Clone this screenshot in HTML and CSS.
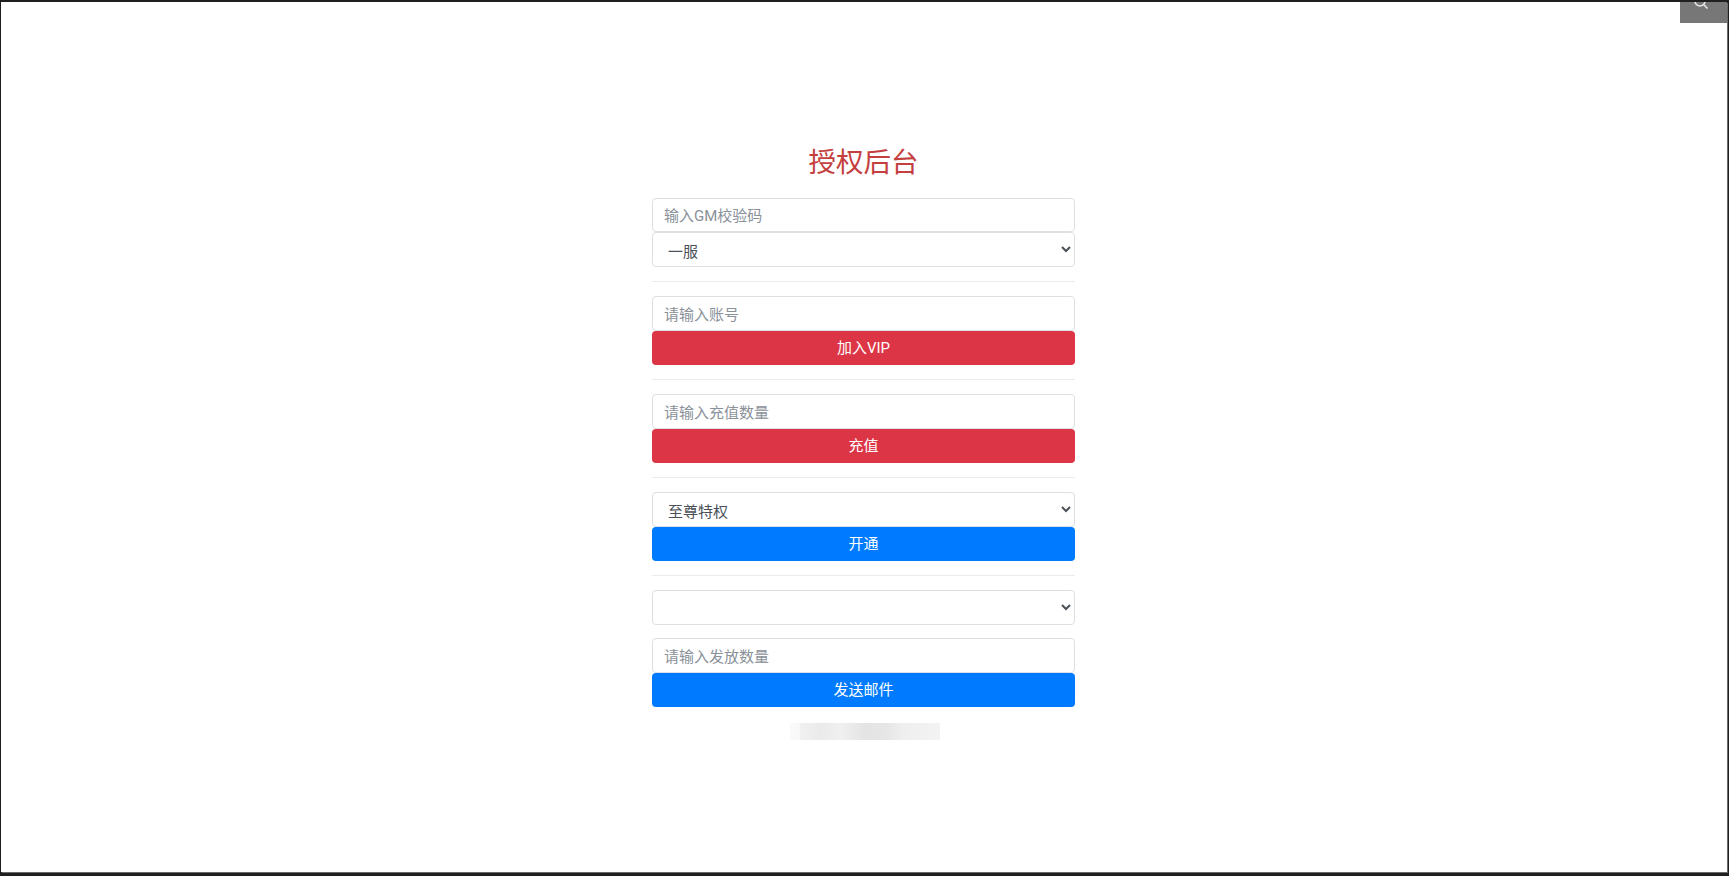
FILE: index.html
```html
<!DOCTYPE html>
<html lang="zh-CN">
<head>
    <meta charset="UTF-8">
    <meta name="viewport" content="width=device-width, initial-scale=1.0">
    <title>授权后台</title>
    <link rel="stylesheet" href="styles.css">
</head>
<body>
    <div class="frame">
        <!-- Search toggle, cut off by the top edge -->
        <div class="search-toggle">
            <svg class="search-icon" viewBox="0 0 16 16" width="16" height="16">
                <circle cx="7" cy="7" r="5"></circle>
                <path d="M10.8 10.8 L14.5 14.5"></path>
            </svg>
        </div>

        <div class="container">
            <h1 class="title">授权后台</h1>

            <input class="field field-code" type="text" placeholder="输入GM校验码">
            <select class="field">
                <option>一服</option>
            </select>
            <hr>

            <input class="field" type="text" placeholder="请输入账号">
            <button class="btn btn-danger">加入VIP</button>
            <hr>

            <input class="field" type="text" placeholder="请输入充值数量">
            <button class="btn btn-danger">充值</button>
            <hr>

            <select class="field">
                <option>至尊特权</option>
            </select>
            <button class="btn btn-primary">开通</button>
            <hr>

            <select class="field field-spaced">
                <option></option>
            </select>
            <input class="field" type="text" placeholder="请输入发放数量">
            <button class="btn btn-primary">发送邮件</button>

            <div class="copyright"></div>
        </div>
    </div>
</body>
</html>
```

FILE: styles.css
```css
* {
    margin: 0;
    padding: 0;
    box-sizing: border-box;
}

html, body {
    height: 100%;
    background: #1f1f1f;
}

body {
    font-family: Roboto, "Noto Sans CJK SC", sans-serif;
    overflow: hidden;
}

.frame {
    position: relative;
    height: 870px;
    margin: 2px 2px 0 1px;
    padding-right: 1px;
    background: #fff;
    overflow: hidden;
    box-shadow: 1px 1px 0 #6a6a6a;
}

.search-toggle {
    position: absolute;
    top: 0;
    right: 0;
    width: 47px;
    height: 21px;
    background: #777;
    overflow: hidden;
}

.search-icon {
    position: absolute;
    top: -8px;
    left: 13px;
    fill: none;
    stroke: #e8e8e8;
    stroke-width: 1.6;
}

.container {
    width: 423px;
    margin: 0 auto;
    padding-top: 139px;
    display: flex;
    flex-direction: column;
}

.title {
    color: #c4403f;
    font-size: 27.5px;
    font-weight: 400;
    line-height: 44px;
    height: 57px;
    text-align: center;
}

.field {
    display: block;
    width: 100%;
    height: 35px;
    padding: 2px 11px 0;
    font-family: inherit;
    font-size: 15px;
    color: #495057;
    background-color: #fff;
    border: 1px solid #dcdfe3;
    border-radius: 4px;
}

select.field {
    padding-top: 5px;
}

.field::placeholder {
    color: #8a9199;
}

.field-code {
    height: 34px;
    padding-top: 1px;
}

.field-spaced {
    margin-bottom: 13px;
}

.btn {
    display: block;
    width: 100%;
    height: 34px;
    padding-bottom: 4px;
    font-family: inherit;
    font-size: 15px;
    color: #fff;
    border: 0;
    border-radius: 4px;
}

.btn-danger {
    background: #dc3545;
}

.btn-primary {
    background: #007bff;
}

hr {
    height: 1px;
    margin: 14px 0;
    border: 0;
    background: rgba(0, 0, 0, 0.08);
}

/* Blurred out line under the form */
.copyright {
    width: 150px;
    height: 17px;
    margin: 16px 135px 0 138px;
    background: linear-gradient(90deg, #fafafa 0, #f8f8f8 10px, #f1f1f1 10px, #eaeaea 30px, #f0f0f0 50px, #e4e4e4 75px, #e6e6e6 95px, #efefef 115px, #f3f3f3 150px);
}
```
